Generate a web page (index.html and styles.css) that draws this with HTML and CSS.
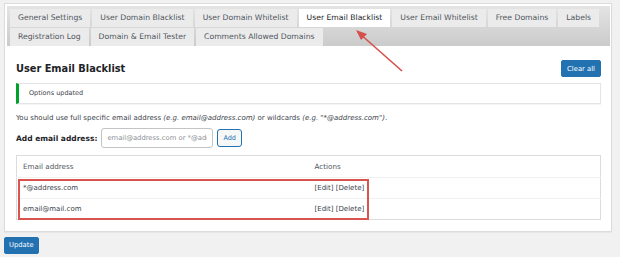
FILE: index.html
```html
<!DOCTYPE html>
<html lang="en">
<head>
  <meta charset="UTF-8">
  <title>User Email Blacklist</title>
  <link rel="stylesheet" href="styles.css">
</head>
<body>

  <div class="panel">
    <div class="tabs">
      <a class="tab">General Settings</a>
      <a class="tab">User Domain Blacklist</a>
      <a class="tab">User Domain Whitelist</a>
      <a class="tab active">User Email Blacklist</a>
      <a class="tab">User Email Whitelist</a>
      <a class="tab">Free Domains</a>
      <a class="tab">Labels</a>
      <a class="tab">Registration Log</a>
      <a class="tab">Domain &amp; Email Tester</a>
      <a class="tab">Comments Allowed Domains</a>
    </div>

    <div class="content">
      <div class="title-row">
        <h1>User Email Blacklist</h1>
        <button class="btn-primary">Clear all</button>
      </div>

      <div class="notice">Options updated</div>

      <p class="desc">You should use full specific email address <em>(e.g. email@address.com)</em> or wildcards <em>(e.g. "*@address.com")</em>.</p>

      <div class="add-row">
        <label for="email">Add email address:</label>
        <input type="text" id="email" placeholder="email@address.com or *@address.com">
        <button class="btn-secondary">Add</button>
      </div>

      <div class="list">
        <table>
          <thead>
            <tr><th class="col-email">Email address</th><th>Actions</th></tr>
          </thead>
          <tbody>
            <tr><td>*@address.com</td><td>[Edit] [Delete]</td></tr>
            <tr><td>email@mail.com</td><td>[Edit] [Delete]</td></tr>
          </tbody>
        </table>
        <!-- annotation -->
        <div class="highlight"></div>
      </div>
    </div>
  </div>

  <button class="btn-primary update">Update</button>

  <!-- annotation arrow -->
  <svg class="arrow" width="60" height="50" viewBox="0 0 60 50">
    <line x1="55" y1="44" x2="12" y2="6" stroke="#d5504b" stroke-width="1.6"/>
    <polygon points="9,3 20,7 14,13" fill="#d5504b"/>
  </svg>

</body>
</html>
```

FILE: styles.css
```css
* {
  margin: 0;
  padding: 0;
  box-sizing: border-box;
}

body {
  font-family: "DejaVu Sans", Verdana, sans-serif;
  background-color: #f1f1f1;
  color: #3c434a;
  padding: 3px 8px 0 4px;
  position: relative;
  width: 620px;
  height: 257px;
  overflow: hidden;
}

/* Panel */
.panel {
  width: 608px;
  height: 229px;
  background-color: #fff;
  border: 1px solid #dcdcde;
  box-shadow: 0 1px 1px rgba(0, 0, 0, 0.04);
}

/* Tabs */
.tabs {
  margin: 2px 1px 0 2px;
  padding: 3px 0 0 3px;
  display: flex;
  flex-wrap: wrap;
  gap: 1px 2px;
  background: linear-gradient(#e4e4e4, #cbcbcb);
}

.tab {
  height: 18px;
  line-height: 18px;
  padding: 0 8px;
  font-size: 7.7px;
  color: #50575e;
  background-color: #ebebeb;
  cursor: pointer;
}

.tab.active {
  background-color: #fff;
  color: #1d2327;
}

/* Content */
.content {
  padding: 14px 10px 0 11px;
}

.title-row {
  display: flex;
  justify-content: space-between;
  align-items: center;
  height: 17px;
}

h1 {
  font-size: 9.8px;
  font-weight: bold;
  color: #1d2327;
}

button {
  font-family: inherit;
  cursor: pointer;
}

.btn-primary {
  height: 17px;
  padding: 0 5px;
  font-size: 6.8px;
  color: #fff;
  background-color: #2271b1;
  border: 1px solid #2271b1;
  border-radius: 2px;
}

.notice {
  margin-top: 6px;
  height: 21px;
  line-height: 19px;
  padding-left: 10px;
  font-size: 6.5px;
  border: 1px solid #e2e4e7;
  border-left: 3px solid #00a32a;
  box-shadow: 0 1px 1px rgba(0, 0, 0, 0.04);
}

.desc {
  margin-top: 9px;
  font-size: 7px;
  line-height: 10px;
}

.add-row {
  margin-top: 5px;
  display: flex;
  align-items: center;
  gap: 4px;
}

.add-row label {
  font-size: 7.5px;
  font-weight: bold;
  color: #1d2327;
}

.add-row input {
  width: 112px;
  height: 20px;
  padding: 0 5px;
  font-family: inherit;
  font-size: 6.8px;
  border: 1px solid #c3c4c7;
  border-radius: 3px;
}

.add-row input::placeholder {
  color: #8c8f94;
}

.btn-secondary {
  height: 18px;
  padding: 0 5px;
  font-size: 6.5px;
  color: #2271b1;
  background-color: #f6f7f7;
  border: 1px solid #2271b1;
  border-radius: 3px;
}

/* List */
.list {
  margin-top: 7px;
  position: relative;
}

table {
  width: 100%;
  border-collapse: collapse;
  border: 1px solid #dcdcde;
  font-size: 7px;
}

th {
  text-align: left;
  font-weight: normal;
  font-size: 7.2px;
  height: 22px;
  padding: 0 6px;
  color: #50575e;
}

.col-email {
  width: 292px;
}

td {
  height: 21px;
  padding: 0 6px;
  border-top: 1px solid #f0f0f1;
}

.highlight {
  position: absolute;
  left: 2px;
  top: 24px;
  width: 351px;
  height: 41px;
  border: 2px solid #d9534f;
}

.update {
  margin-top: 4px;
  padding: 0 4px;
}

.arrow {
  position: absolute;
  left: 347px;
  top: 27px;
}
```
